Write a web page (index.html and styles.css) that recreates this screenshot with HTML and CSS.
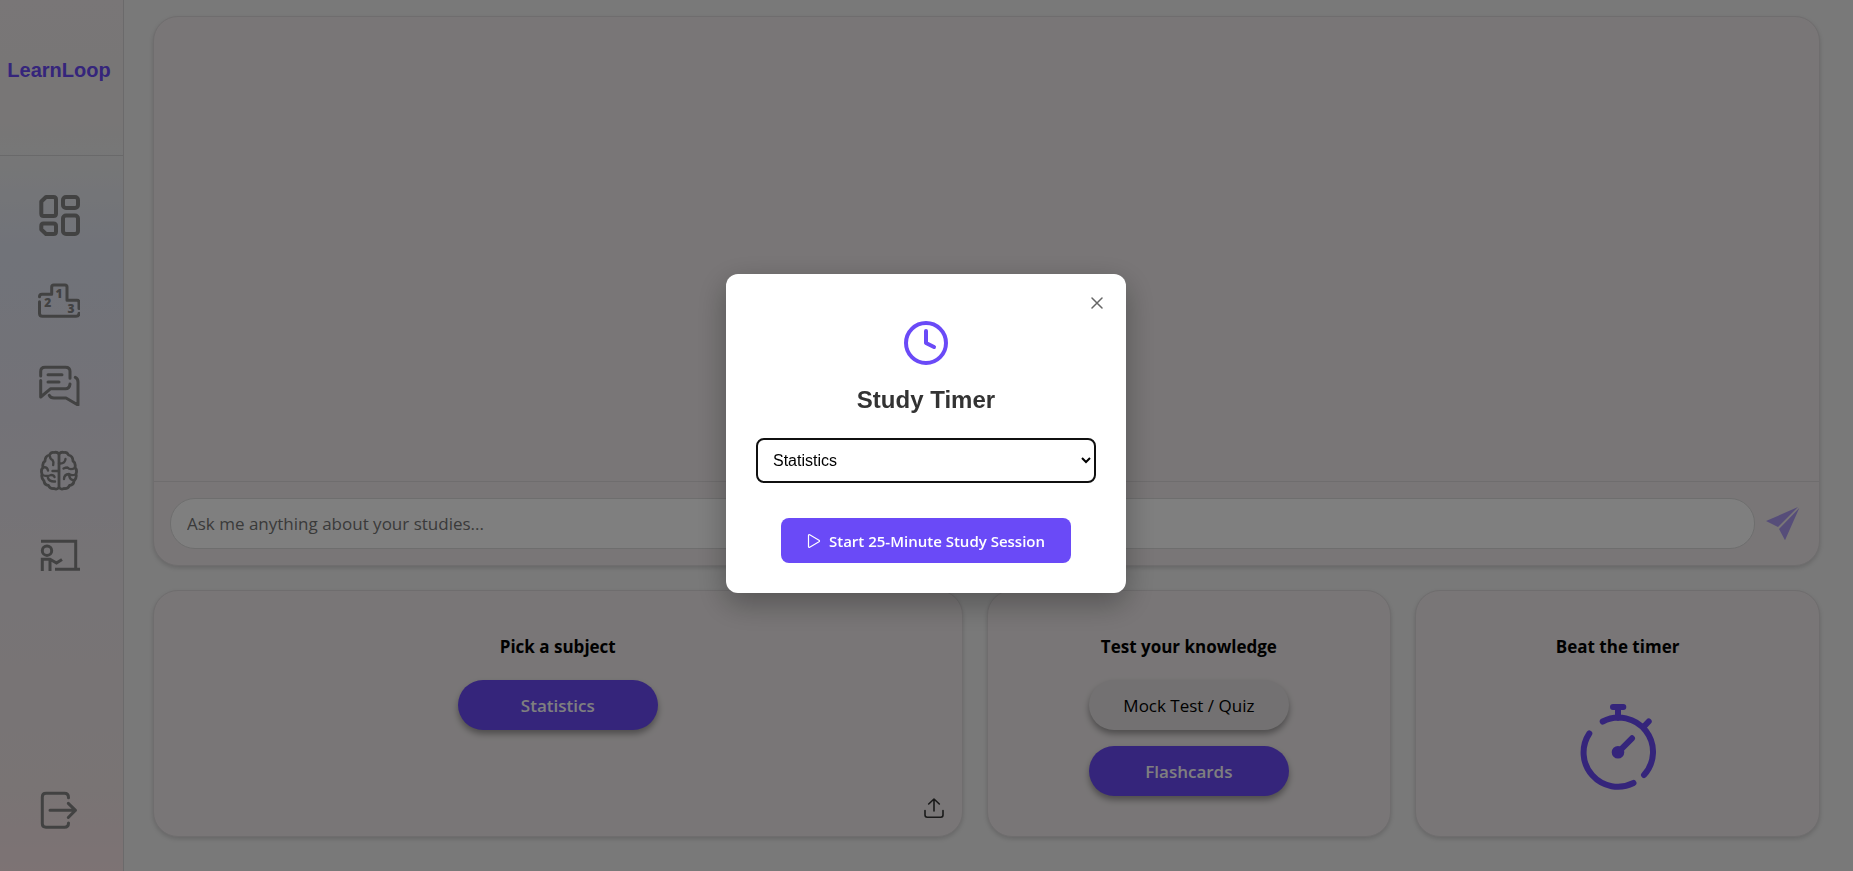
FILE: index.html
```
<!DOCTYPE html>
<html lang="en">
<head>
<meta charset="utf-8">
<title>LearnLoop</title>
<link rel="stylesheet" href="styles.css">
</head>
<body>
<div class="app">
  <aside class="sidebar">
    <div class="brand">LearnLoop</div>
    <nav class="nav" aria-label="Main">
      <a href="#" class="nav-link" aria-label="Dashboard">
        <svg class="nav-icon" viewBox="0 0 42 42" stroke-width="4">
          <path d="M8 3H15.500Q18 3 18 5.500V19.500Q18 22 15.500 22H5.500Q3.300 22 3.300 19.500V7.500Z"/>
          <rect x="25" y="3" width="15" height="11" rx="3"/>
          <rect x="25" y="21.500" width="15" height="18.500" rx="3"/>
          <path d="M5.500 29.500H15.500Q18 29.500 18 32V37.500Q18 40 15.500 40H8L3.300 35.500V32Q3.300 29.500 5.500 29.500Z"/>
        </svg>
      </a>
      <a href="#" class="nav-link" aria-label="Leaderboard">
        <svg class="nav-icon" viewBox="0 -1 42 42" stroke-width="3">
          <path d="M1.500 16.700Q1.500 14.300 4 14.300H13.700V7Q13.700 5 15.700 5H27Q29 5 29 7V20.300H39Q41 20.300 41 22.500V28.500M1.500 21.700V33.300Q1.500 36.300 4.500 36.300H38Q41 36.300 41 33.300"/>
          <g class="rank" stroke="none"><text x="21" y="18">1</text><text x="9.700" y="26.500">2</text><text x="33" y="33">3</text></g>
        </svg>
      </a>
      <a href="#" class="nav-link" aria-label="Chat">
        <svg class="nav-icon" viewBox="0 -1 42 42" stroke-width="3">
          <path d="M2.700 11V6.500Q2.700 2.300 7 2.300H27.500Q32 2.300 32 6.500V13.300M32 19Q31.500 23.700 27.500 23.700H12.700L2.700 32V15.500M10 9.700H24M10 17H21M37.300 12.300Q40 13.500 40 17V40L28 33H16Q12.500 33 11.300 30.300"/>
        </svg>
      </a>
      <a href="#" class="nav-link" aria-label="Mind">
        <svg class="nav-icon" viewBox="0 0 42 42" stroke-width="2.800">
          <path d="M21 5Q19 2.500 16 3.500Q13 2.800 11.500 6Q7 7 7 12Q4 14 5 18.500Q2.500 21 4 25Q3 29 6 32Q6.500 36 10.500 36.500Q12 40 16 39.500Q19 41 21 38.500Z"/>
          <path d="M21 5Q23 2.500 26 3.500Q29 2.800 30.500 6Q35 7 35 12Q38 14 37 18.500Q39.500 21 38 25Q39 29 36 32Q35.500 36 31.500 36.500Q30 40 26 39.500Q23 41 21 38.500"/>
          <path stroke-width="2.400" d="M12 7.500Q12 10 14.500 11Q16 13 15.200 16M5 18.500Q9 17.500 10 21.500M14.500 22H21M4.500 26Q9 28 13 26Q16 26 16.500 28M10 29Q11.500 33 17 32.500M21 14.500Q27 15 27.500 10M37 19Q32 21.500 29.500 18.500Q27.500 18.500 25.500 19.500M37.500 25.500Q34 27 31 25Q26 25.500 26 30M31 26Q32 31 35 31"/>
        </svg>
      </a>
      <a href="#" class="nav-link" aria-label="Classroom">
        <svg class="nav-icon square" viewBox="0 -1 42 42" stroke-width="3">
          <path d="M3 6.300H37.700V34.300M17 34.300H42M4.300 36V24.300H12L18.500 28L24 24.500M12 36V25"/>
          <circle cx="9" cy="15.700" r="4.700"/>
        </svg>
      </a>
      <a href="#" class="nav-link logout" aria-label="Log out">
        <svg class="nav-icon" viewBox="0 0 42 42" stroke-width="3">
          <path d="M30.500 8.700Q30.500 4.300 26.500 4.300H8Q4.300 4.300 4.300 8V34.600Q4.300 38.300 8 38.300H26.500Q30.500 38.300 30.500 34M12 21.300H37.500M30.300 14.300L37.500 21.300L30.300 28.500"/>
        </svg>
      </a>
    </nav>
  </aside>

  <main class="main">
    <section class="panel chat">
      <div class="messages"></div>
      <form class="composer">
        <input class="ask" type="text" aria-label="Question" placeholder="Ask me anything about your studies...">
        <button class="send" type="button" aria-label="Send">
          <svg viewBox="0 0 34 34"><path d="M0 14L32 0L12 20ZM33.300 1L19 33.300L13 22Z"/></svg>
        </button>
      </form>
    </section>

    <div class="cards">
      <section class="panel card subjects">
        <h2 class="card-title">Pick a subject</h2>
        <button class="pill primary" type="button">Statistics</button>
        <button class="upload" type="button" aria-label="Upload">
          <svg viewBox="0 0 20 20"><path d="M1 12.500V17Q1 19.200 3.200 19.200H16.800Q19 19.200 19 17V12.500M10 13V1M4.700 6L10 1L15.300 6"/></svg>
        </button>
      </section>
      <section class="panel card">
        <h2 class="card-title">Test your knowledge</h2>
        <button class="pill" type="button">Mock Test / Quiz</button>
        <button class="pill primary" type="button">Flashcards</button>
      </section>
      <section class="panel card">
        <h2 class="card-title">Beat the timer</h2>
        <button class="stopwatch" type="button" aria-label="Open study timer">
          <svg viewBox="0 0 76 86">
            <path d="M22.700 17.500A34.300 34.300 0 0 1 64 71M53.500 79A34.300 34.300 0 0 1 9.300 29.500M33 3H43.300M38 3V14M63.500 23L68.700 17.500M38 48.300L52 34.300"/>
            <circle cx="38" cy="48.300" r="3.300"/>
          </svg>
        </button>
      </section>
    </div>
  </main>
</div>

<div class="overlay">
  <div class="modal" role="dialog" aria-modal="true" aria-labelledby="timer-title">
    <button class="close" type="button" aria-label="Close">
      <svg viewBox="0 0 12 12"><path d="M1 1L11 11M11 1L1 11"/></svg>
    </button>
    <svg class="clock" viewBox="0 0 24 24"><circle cx="12" cy="12" r="10"/><path d="M12 6V12L16 14"/></svg>
    <h2 class="modal-title" id="timer-title">Study Timer</h2>
    <select class="subject-select" aria-label="Subject"><option>Statistics</option></select>
    <button class="start" type="button">
      <svg viewBox="0 0 14 14"><path d="M1.500 1.500Q1.500 .3 2.700 .8L12 6.200Q13 7 12 7.800L2.700 13.200Q1.500 13.700 1.500 12.500Z"/></svg>
      Start 25-Minute Study Session
    </button>
  </div>
</div>
</body>
</html>
```
FILE: styles.css
```
* { box-sizing: border-box; }

body {
  margin: 0;
  background: #f2f2f2;
  color: #000;
  font-family: "Segoe UI", "Open Sans", sans-serif;
}

button { font-family: inherit; cursor: pointer; }

svg { display: block; fill: none; stroke-linecap: round; stroke-linejoin: round; }

.app { display: flex; min-height: 100vh; }

.sidebar {
  display: flex;
  flex-direction: column;
  width: 124px;
  flex-shrink: 0;
  border-right: 1px solid #d6d4d6;
  background: linear-gradient(180deg, #f2edee 0%, #f0ecec 14%, #eeeeee 17%, #e2e6f3 29%, #e7e5ef 48%, #efe9ec 70%, #f2e8e9 90%, #fae6e8 100%);
}

.brand {
  height: 156px;
  padding: 58px 5px 0 0;
  border-bottom: 1px solid #d2d2d4;
  color: #6a4af7;
  font: bold 20px/24px Arial, "Liberation Sans", sans-serif;
  text-align: center;
}

.nav {
  display: flex;
  flex: 1;
  flex-direction: column;
  align-items: center;
  gap: 43px;
  padding: 38px 5px 40px 0;
}

.nav-icon { width: 42px; height: 42px; stroke: #848484; }
.nav-icon.square { stroke-linecap: butt; stroke-linejoin: miter; }
.rank { fill: #848484; font: 800 12px "Open Sans", sans-serif; text-anchor: middle; }
.logout { margin-top: auto; }

.main {
  display: flex;
  flex: 1;
  flex-direction: column;
  gap: 24px;
  padding: 16px 33px 34px 29px;
}

.panel {
  border: 1px solid #dedadc;
  border-radius: 25px;
  background: #f2edee;
  box-shadow: 0 2px 4px rgba(0, 0, 0, 0.15);
}

.chat { display: flex; flex: 1; flex-direction: column; }
.messages { flex: 1; }

.composer {
  display: flex;
  align-items: center;
  gap: 11px;
  padding: 16px 19px 16px 16px;
  border-top: 1px solid #dedadc;
}

.ask {
  flex: 1;
  height: 51px;
  padding: 0 16px;
  border: 1px solid #dcdcdc;
  border-radius: 25px;
  background: #fff;
  font: 17px "Segoe UI", "Open Sans", sans-serif;
}
.ask::placeholder { color: #757575; }

.send { padding: 0; border: 0; background: none; }
.send svg { width: 34px; height: 34px; fill: #6a4af7; opacity: 0.5; }

.cards { display: grid; grid-template-columns: 2fr 1fr 1fr; gap: 24px; }

.card {
  position: relative;
  display: flex;
  flex-direction: column;
  align-items: center;
  gap: 16px;
  padding: 43px 16px 40px;
}

.card-title { margin: 0 0 4px; font-size: 17px; line-height: 26px; }

.pill {
  width: 200px;
  height: 50px;
  border: 0;
  border-radius: 25px;
  background: #e6e3e4;
  box-shadow: 0 4px 6px rgba(0, 0, 0, 0.35);
  color: #000;
  font-size: 17px;
}
.pill.primary { background: #6a4af7; color: #fff; font-weight: 600; }

.upload {
  position: absolute;
  right: 18px;
  bottom: 18px;
  padding: 0;
  border: 0;
  background: none;
}
.upload svg { width: 20px; height: 20px; stroke: #333; stroke-width: 1.6; }

.stopwatch { margin-top: 24px; padding: 0; border: 0; background: none; }
.stopwatch svg { width: 76px; height: 86px; stroke: #6a4af7; stroke-width: 6; }

.overlay {
  position: fixed;
  inset: 0;
  display: flex;
  align-items: center;
  justify-content: center;
  padding: 0 1px 4px 0;
  background: rgba(0, 0, 0, 0.5);
}

.modal {
  position: relative;
  display: flex;
  flex-direction: column;
  align-items: center;
  width: 400px;
  padding: 45px 30px 30px;
  border-radius: 12px;
  background: #fff;
  box-shadow: 0 10px 30px rgba(0, 0, 0, 0.3);
}

.close {
  position: absolute;
  top: 17px;
  right: 17px;
  padding: 6px;
  border: 0;
  background: none;
}
.close svg { width: 12px; height: 12px; stroke: #666; stroke-width: 1.5; }

.clock { width: 48px; height: 48px; stroke: #6a4af7; stroke-width: 2; }

.modal-title {
  margin: 19px 0 24px;
  color: #333;
  font: bold 24px/28px Arial, "Liberation Sans", sans-serif;
}

.subject-select {
  width: 100%;
  height: 45px;
  padding: 0 11px;
  border: 2px solid #101010;
  border-radius: 8px;
  background: #fff;
  color: #000;
  font: 16px Arial, "Liberation Sans", sans-serif;
}

.start {
  display: flex;
  align-items: center;
  gap: 8px;
  height: 45px;
  margin-top: 35px;
  padding: 0 26px;
  border: 0;
  border-radius: 8px;
  background: #6a4af7;
  color: #fff;
  font-size: 15px;
  font-weight: 600;
  white-space: nowrap;
}
.start svg { width: 14px; height: 14px; stroke: #fff; stroke-width: 1.2; }
```
